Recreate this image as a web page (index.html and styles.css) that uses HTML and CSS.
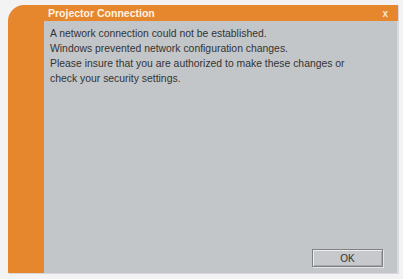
FILE: index.html
```html
<!DOCTYPE html>
<html>
<head>
<meta charset="utf-8">
<link rel="stylesheet" href="styles.css">
</head>
<body>
<div class="window">
  <div class="titlebar">
    <span class="title">Projector Connection</span>
    <span class="close">x</span>
  </div>
  <div class="content">
    <div class="message">
      <p>A network connection could not be established.</p>
      <p>Windows prevented network configuration changes.</p>
      <p>Please insure that you are authorized to make these changes or</p>
      <p>check your security settings.</p>
    </div>
    <div class="actions">
      <button class="ok">OK</button>
    </div>
  </div>
</div>
</body>
</html>
```
FILE: styles.css
```css
html, body {
  margin: 0;
  padding: 0;
  background: #f3f3f3;
  width: 403px;
  height: 279px;
  overflow: hidden;
}
body {
  padding: 5px 5px 0 8px;
  box-sizing: border-box;
  font-family: "DejaVu Sans", "Liberation Sans", sans-serif;
}
.window {
  width: 390px;
  height: 268px;
  background: #e6862d;
  border-radius: 16px 0 0 0;
  display: flex;
  flex-direction: column;
  padding-left: 36px;
  box-sizing: border-box;
  box-shadow: 1px 1px 0 #d9d6dc;
}
.titlebar {
  height: 16px;
  display: flex;
  align-items: center;
  justify-content: space-between;
  padding: 0 10px 0 4px;
  color: #fff4e4;
  flex: none;
}
.title {
  font-family: "Liberation Sans", sans-serif;
  font-weight: bold;
  font-size: 10.5px;
}
.close {
  font-family: "Liberation Sans", sans-serif;
  font-weight: bold;
  font-size: 10px;
  color: #f4e7da;
}
.content {
  flex: 1;
  background: #c3c6c9;
  display: flex;
  flex-direction: column;
  justify-content: space-between;
  padding: 5px 14px 6px 6px;
  border-right: 1px solid #dcdde0;
}
.message p {
  margin: 0;
  font-family: "Liberation Sans", sans-serif;
  font-size: 10.4px;
  line-height: 15px;
  color: #333333;
}
.actions {
  display: flex;
  justify-content: flex-end;
}
.ok {
  width: 71px;
  height: 18px;
  background: #c6c8cb;
  border: 1px solid #7f8184;
  box-shadow: inset 1px 1px 0 #eeeeee, inset -1px -1px 0 #a6a8ab, 1px 1px 0 #e4e4e4;
  font-family: "Liberation Sans", sans-serif;
  font-size: 10px;
  color: #333;
  padding: 0;
}
```
